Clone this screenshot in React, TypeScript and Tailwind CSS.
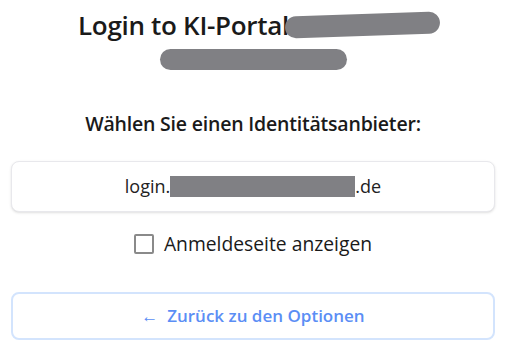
import React, {useState} from "react";

const font = {fontFamily: '"Open Sans", "Noto Sans", sans-serif'};

const Blob: React.FC<{className: string}> = ({className}) => (
    <span className={"inline-block rounded-full bg-[#808084] " + className}/>
);

const App: React.FC = () => {
    const [showLogin, setShowLogin] = useState(false);

    return (
        <div className="min-h-screen bg-white px-[11px] pt-[8px] text-[#1a1a1a]" style={font}>
            <h1 className="flex flex-col items-center text-[26px] font-semibold leading-[34px] tracking-[-0.3px]">
                <span className="ml-[12px] flex items-center">
                    Login to KI-Portal
                    <Blob className="ml-[-4px] h-[22px] w-[155px] -rotate-2"/>
                </span>
                <Blob className="mt-[7px] h-[21px] w-[187px]"/>
            </h1>

            <p className="mt-[40px] text-center text-[19.5px] font-semibold leading-[28px] tracking-[-0.2px]">
                Wählen Sie einen Identitätsanbieter:
            </p>

            <button className="mt-[23px] flex h-[51px] w-full items-center justify-center rounded-lg border border-[#e8e8ec] bg-white text-[18px] text-[#222] shadow-sm">
                login.
                <span className="inline-block h-[21px] w-[185px] bg-[#808084]"/>
                .de
            </button>

            <label className="mt-[21px] flex items-center justify-center gap-[10px] text-[19.3px] leading-[22px]">
                <input
                    type="checkbox"
                    checked={showLogin}
                    onChange={e => setShowLogin(e.target.checked)}
                    className="h-[20px] w-[20px] appearance-none rounded-[2px] border-2 border-[#8a8a8a] bg-white"
                />
                Anmeldeseite anzeigen
            </label>

            <button className="mt-[37px] flex h-[48px] w-full items-center justify-center rounded-lg border-2 border-[#d3e4fd] bg-white text-[17px] font-semibold text-[#5b8ef5]">
                ← &nbsp;Zurück zu den Optionen
            </button>
        </div>
    );
};

export default App;
